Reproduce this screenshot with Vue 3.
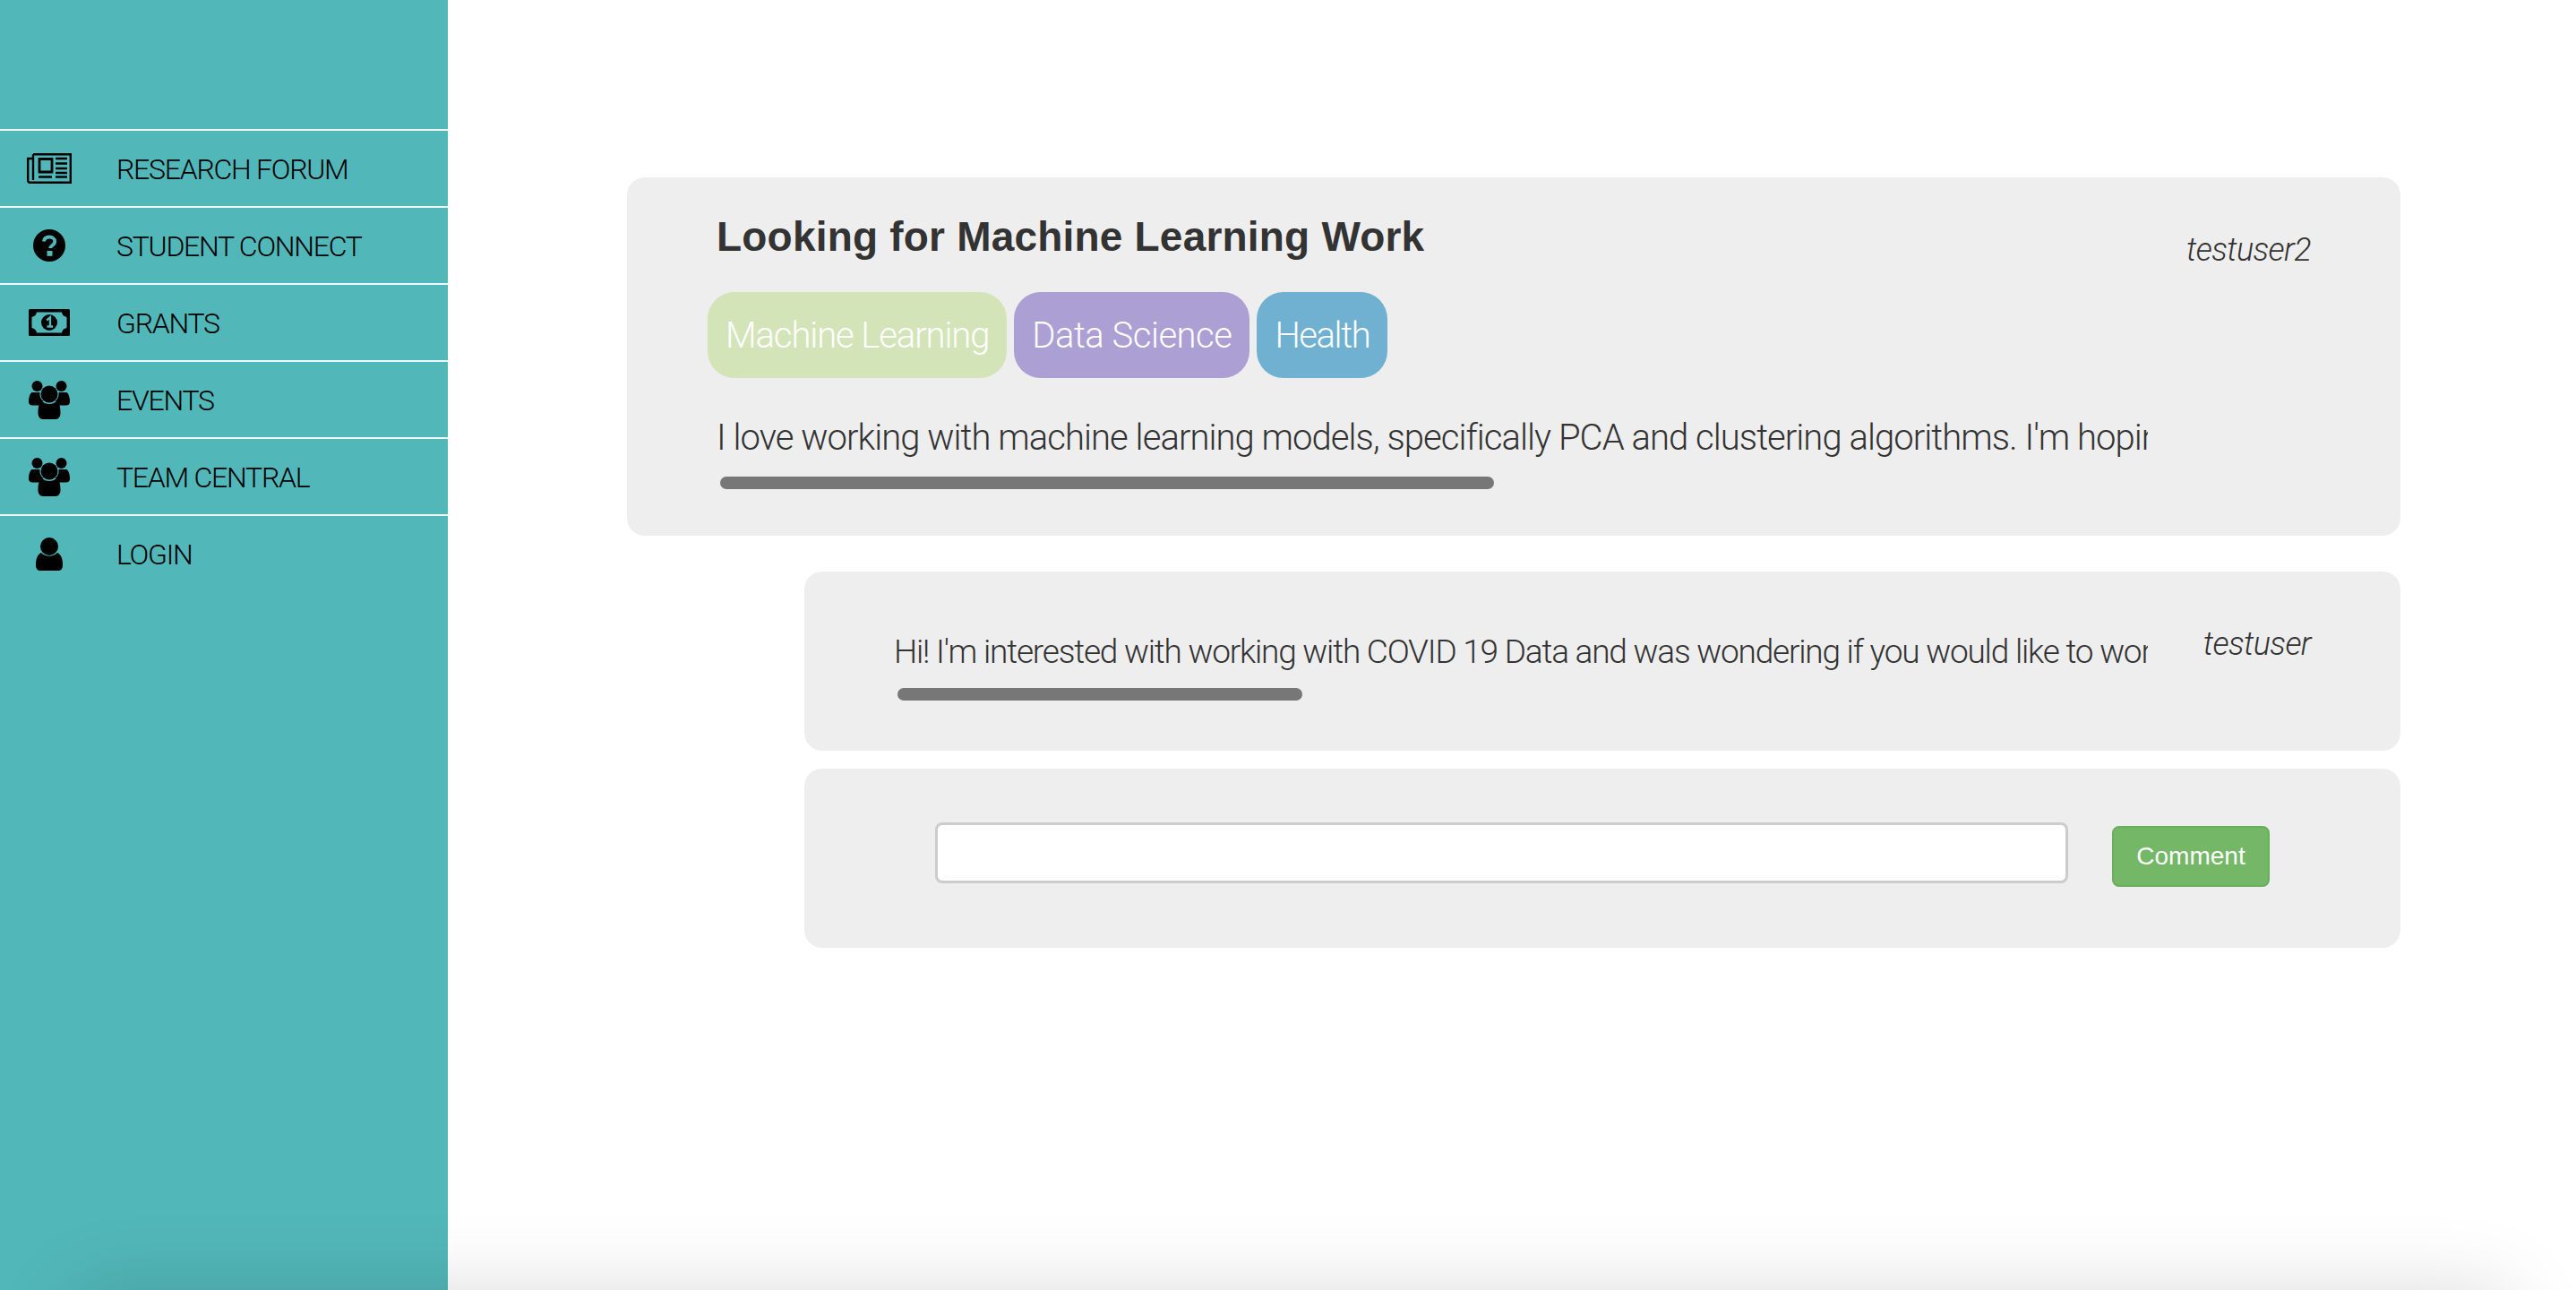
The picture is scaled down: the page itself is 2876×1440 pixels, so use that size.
<template>
  <div class="page">
    <aside class="sidebar">
      <nav class="nav">
        <a v-for="item in navItems" :key="item.label" class="nav-item">
          <span class="nav-icon">
            <svg v-if="item.icon === 'news'" width="50" height="34" viewBox="0 0 50 34">
              <path d="M7 1.2h41.8v31.6H3.5A2.4 2.4 0 0 1 1.2 30.5V6h5.6" fill="none" stroke="#000" stroke-width="2.4" />
              <path d="M7 1.2V30" fill="none" stroke="#000" stroke-width="2.4" />
              <path d="M14 6.5h14v14.500H14z" fill="none" stroke="#000" stroke-width="2.8" />
              <path d="M32 6h13M32 11.500h13M32 17h13M32 22h13M13 26.500h15M32 26.500h13" fill="none" stroke="#000" stroke-width="2.6" />
            </svg>
            <svg v-else-if="item.icon === 'question'" width="36" height="36" viewBox="0 0 36 36">
              <circle cx="18" cy="18" r="18" fill="#000" />
              <path d="M11.800 13.500c.6-3.300 3-5 6.200-5 3.500 0 6.200 2 6.200 5.100 0 4.300-5 4.400-5 7.400" fill="none" stroke="#52b7b9" stroke-width="3.800" />
              <rect x="15.500" y="24" width="6" height="5.800" fill="#52b7b9" />
            </svg>
            <svg v-else-if="item.icon === 'money'" width="46" height="30" viewBox="0 0 46 30">
              <rect width="46" height="30" rx="1.500" fill="#000" />
              <path d="M9 3.500h28c.4 3 2.400 5 5.500 5.500v12c-3 .5-5 2.500-5.500 5.500H9C8.500 23.500 6.500 21.500 3.500 21V9C6.500 8.500 8.500 6.500 9 3.500z" fill="#52b7b9" />
              <circle cx="23" cy="15" r="9" fill="#000" />
              <path d="M20.200 12.500l3.800-3.200v9.700M20.500 19.500h6.500" fill="none" stroke="#52b7b9" stroke-width="2.300" />
            </svg>
            <svg v-else-if="item.icon === 'users'" width="46" height="43" viewBox="0 0 46 43">
              <circle cx="9.500" cy="6" r="6" fill="#000" />
              <circle cx="36.500" cy="6" r="6" fill="#000" />
              <path d="M3.500 13h9c-.5 5 1.500 8 4 9.800-2.500 1.300-4 2.700-5 4.700H4.500C1.500 27.500 0 26 0 23.500 0 19 1 15 3.500 13zM42.500 13h-9c.5 5-1.500 8-4 9.800 2.500 1.300 4 2.700 5 4.700h7c3 0 4.500-1.500 4.500-4 0-4.500-1-8.500-3.500-10.500z" fill="#000" />
              <circle cx="23" cy="15" r="9.500" fill="#000" />
              <path d="M14.500 22.500c4.500 4.800 12.500 4.800 17 0 2.500 2 4 5.500 4 13.500 0 4-2 7-5.500 7H16c-3.500 0-5.500-3-5.500-7 0-8 1.500-11.500 4-13.500z" fill="#000" />
            </svg>
            <svg v-else width="30" height="37" viewBox="0 0 30 37">
              <circle cx="15" cy="10" r="10" fill="#000" />
              <path d="M6 17c5 5 13 5 18 0 4 2 6 6 6 13.500 0 4-1.500 6.500-5 6.500H5c-3.500 0-5-2.500-5-6.500C0 23 2 19 6 17z" fill="#000" />
            </svg>
          </span>
          <span class="nav-label">{{ item.label }}</span>
        </a>
      </nav>
    </aside>

    <main class="content">
      <section class="card post">
        <div class="post-body">
          <h2 class="title">{{ post.title }}</h2>
          <div class="tags">
            <span v-for="tag in post.tags" :key="tag.name" class="tag" :class="tag.cls">{{ tag.name }}</span>
          </div>
          <p class="text">{{ post.text }}</p>
          <div class="thumb thumb-post"></div>
        </div>
        <span class="author author-post">{{ post.author }}</span>
      </section>

      <section class="card comment">
        <div class="comment-body">
          <p class="text text-small">{{ comment.text }}</p>
          <div class="thumb thumb-comment"></div>
        </div>
        <span class="author author-comment">{{ comment.author }}</span>
      </section>

      <section class="card form">
        <input class="input" type="text" />
        <button class="btn" type="button">Comment</button>
      </section>
    </main>

    <div class="shade"></div>
  </div>
</template>

<script setup>
const navItems = [
  { label: 'RESEARCH FORUM', icon: 'news' },
  { label: 'STUDENT CONNECT', icon: 'question' },
  { label: 'GRANTS', icon: 'money' },
  { label: 'EVENTS', icon: 'users' },
  { label: 'TEAM CENTRAL', icon: 'users' },
  { label: 'LOGIN', icon: 'user' }
]

const post = {
  title: 'Looking for Machine Learning Work',
  author: 'testuser2',
  text: "I love working with machine learning models, specifically PCA and clustering algorithms. I'm hoping to find a team to work with on a project this year.",
  tags: [
    { name: 'Machine Learning', cls: 'tag-ml' },
    { name: 'Data Science', cls: 'tag-ds' },
    { name: 'Health', cls: 'tag-health' }
  ]
}

const comment = {
  author: 'testuser',
  text: "Hi! I'm interested with working with COVID 19 Data and was wondering if you would like to work on a project together sometime soon."
}
</script>

<style>
html,
body {
  margin: 0;
  background: #fff;
  overflow: hidden;
}
</style>

<style scoped>
.page {
  display: flex;
  height: 1440px;
  font-family: Roboto, "Liberation Sans", sans-serif;
}

.sidebar {
  width: 500px;
  flex: none;
  background: #52b7b9;
  padding-top: 144px;
  box-sizing: border-box;
}

.nav-item {
  display: flex;
  align-items: center;
  height: 84px;
  border-top: 2px solid #eef7f7;
  color: #000;
  font-size: 32px;
  font-weight: 300;
}

.nav-icon {
  width: 110px;
  display: flex;
  justify-content: center;
  align-items: center;
}

.nav-label {
  margin-left: 20px;
  padding-top: 1px;
  letter-spacing: -1.25px;
}

.content {
  flex: 1;
  padding: 198px 196px 0 200px;
  min-width: 0;
}

.card {
  background: #eee;
  border-radius: 20px;
}

.post {
  display: flex;
  justify-content: space-between;
  padding: 39px 100px 52px 100px;
}

.post-body {
  width: 1598px;
  min-width: 0;
}

.title {
  margin: 0;
  font-family: "Liberation Sans", sans-serif;
  font-size: 46px;
  line-height: 54px;
  font-weight: 700;
  letter-spacing: 0.2px;
  color: #333;
}

.tags {
  display: flex;
  gap: 8px;
  margin: 35px 0 0 -10px;
}

.tag {
  height: 96px;
  line-height: 98px;
  padding: 0 20px;
  border-radius: 30px;
  color: #fff;
  font-size: 40px;
  font-weight: 300;
}

.tag-ml {
  background: #d3e4b8;
  letter-spacing: -1.1px;
}

.tag-ds {
  background: #ac9fd3;
  letter-spacing: -0.5px;
}

.tag-health {
  background: #70b0d0;
  letter-spacing: -1.4px;
}

.text {
  margin: 36px 0 0;
  font-size: 40px;
  line-height: 62px;
  font-weight: 300;
  letter-spacing: -0.95px;
  color: #333;
  white-space: nowrap;
  overflow: hidden;
}

.text-small {
  margin: 0;
  font-size: 37px;
  line-height: 56px;
  letter-spacing: -1.2px;
}

.thumb {
  height: 14px;
  border-radius: 7px;
  background: #777;
}

.thumb-post {
  width: 864px;
  margin: 12px 0 0 4px;
}

.thumb-comment {
  width: 452px;
  margin: 12px 0 0 4px;
}

.author {
  font-size: 36px;
  line-height: 44px;
  font-weight: 300;
  font-style: italic;
  letter-spacing: -0.6px;
  color: #333;
}

.author-post {
  margin-top: 20px;
}

.comment {
  display: flex;
  justify-content: space-between;
  margin: 40px 0 0 198px;
  padding: 62px 100px 56px 100px;
}

.comment-body {
  width: 1400px;
  min-width: 0;
}

.author-comment {
  margin-top: -3px;
}

.form {
  display: flex;
  align-items: flex-start;
  gap: 49px;
  height: 200px;
  box-sizing: border-box;
  margin: 20px 0 0 198px;
  padding: 60px 0 0 146px;
}

.input {
  width: 1265px;
  height: 68px;
  box-sizing: border-box;
  border: 3px solid #ccc;
  border-radius: 8px;
  background: #fff;
  outline: none;
}

.btn {
  width: 176px;
  height: 68px;
  margin-top: 4px;
  border: 2px solid #6bac5f;
  border-radius: 8px;
  background: #74b767;
  color: #fff;
  font-family: "Liberation Sans", sans-serif;
  font-size: 28px;
}

.shade {
  position: fixed;
  inset: 0;
  overflow: hidden;
  pointer-events: none;
}

.shade::after {
  content: "";
  position: absolute;
  left: 85px;
  right: 76px;
  top: 1442px;
  height: 200px;
  box-shadow: 0 0 90px rgba(0, 0, 0, 0.15);
}
</style>
